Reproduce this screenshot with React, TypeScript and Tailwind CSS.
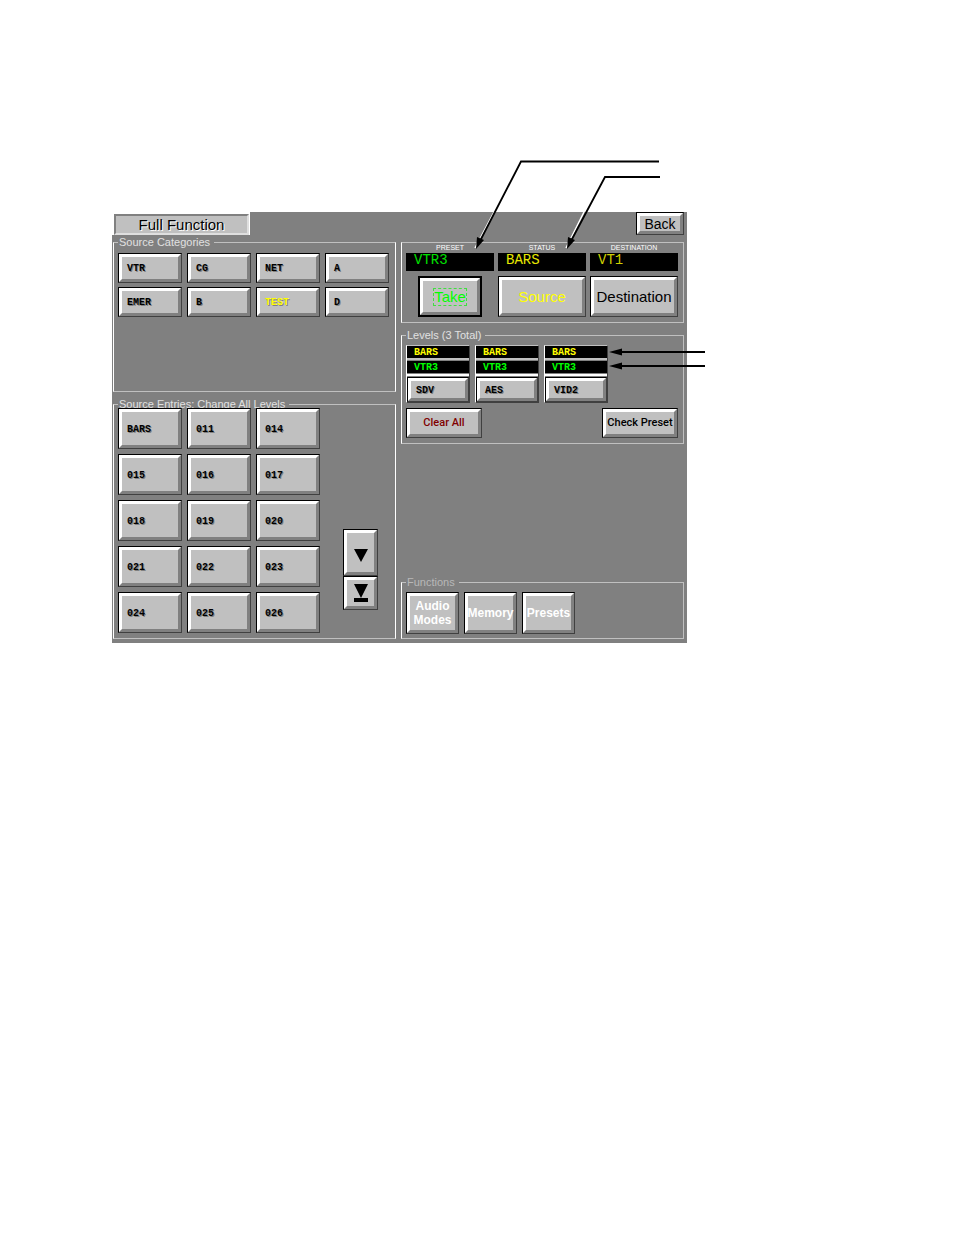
import React, { useState } from "react";
import clsx from "clsx";

const categories = ["VTR", "CG", "NET", "A", "EMER", "B", "TEST", "D"];

const entries = [
  "BARS", "011", "014",
  "015", "016", "017",
  "018", "019", "020",
  "021", "022", "023",
  "024", "025", "026",
];

const levels = ["SDV", "AES", "VID2"];

type PanelButtonProps = React.ButtonHTMLAttributes<HTMLButtonElement> & {
  face?: string;
};

// Raised button: dark outline with a mitred bevel inside
const PanelButton = ({ className, face, children, ...rest }: PanelButtonProps) => (
  <button
    type="button"
    className={clsx(
      "flex border border-t-black border-l-black border-r-[#404040] border-b-[#404040]",
      className
    )}
    {...rest}
  >
    <span
      className={clsx(
        "flex min-w-0 flex-1 items-center self-stretch border-[3px] border-t-white border-l-white border-r-[#808080] border-b-[#808080] bg-[#c0c0c0]",
        face
      )}
    >
      {children}
    </span>
  </button>
);

const monoFace =
  "pt-[2px] pl-[5px] font-['Liberation_Mono',monospace] text-[10px] leading-3 font-bold [text-shadow:1px_1px_0_#808080]";

type GroupProps = {
  title: string;
  className?: string;
  legendClass?: string;
  children: React.ReactNode;
};

const Group = ({ title, className, legendClass, children }: GroupProps) => (
  <fieldset className={clsx("min-w-0 border pl-1", className)}>
    <legend className={clsx("h-2 pr-1 pl-px text-[11px] leading-2", legendClass)}>
      {title}
    </legend>
    {children}
  </fieldset>
);

type ReadoutProps = { label: string; value: string; color: string };

const Readout = ({ label, value, color }: ReadoutProps) => (
  <div className="text-center">
    <div className="h-[10px] text-[7px] leading-[10px] text-white">{label}</div>
    <output
      aria-label={label}
      className={clsx(
        "block h-[18px] bg-black pl-2 text-left font-['Liberation_Mono',monospace] text-[14px] leading-[14px]",
        color
      )}
    >
      {value}
    </output>
  </div>
);

const App = () => {
  const [category, setCategory] = useState("TEST");

  return (
    <main className="relative min-h-screen bg-white pt-[212px] pl-[112px] font-['Liberation_Sans',Arial,sans-serif] text-black">
      <section className="w-full max-w-[575px] bg-[#808080] pb-1">
        <header className="flex h-[23px] justify-between pr-[3px]">
          <div className="flex bg-white pt-[2px] pr-px pl-[2px]">
            <h1 className="flex w-[135px] items-center justify-center border-2 border-t-[#808080] border-l-[#808080] border-r-[#dfdfdf] border-b-[#dfdfdf] bg-[#c0c0c0] text-[15px] leading-4 [text-shadow:1px_1px_0_#fff]">
              Full Function
            </h1>
          </div>
          <PanelButton className="w-12" face="justify-center text-[14px] leading-4">
            Back
          </PanelButton>
        </header>

        <div className="grid grid-cols-2 gap-[5px] pr-[3px] pl-px">
          {/* Left column */}
          <div className="flex flex-col gap-2 pt-[3px]">
            <Group
              title="Source Categories"
              className="h-[154px] border-x-white border-y-[#c0c0c0] pt-[7px] pr-[6px]"
              legendClass="text-[#e0e0e0]"
            >
              <div className="grid grid-cols-4 gap-x-[5px] gap-y-1">
                {categories.map((name) => (
                  <PanelButton
                    key={name}
                    className="h-[30px]"
                    face={clsx(monoFace, name === category && "text-[#ffff00]")}
                    onClick={() => setCategory(name)}
                  >
                    {name}
                  </PanelButton>
                ))}
              </div>
            </Group>

            <Group
              title="Source Entries: Change All Levels"
              className="border-x-white border-y-[#c0c0c0] pr-[6px] pb-[5px]"
              legendClass="text-[#e0e0e0]"
            >
              <div className="grid grid-cols-4 gap-x-[5px]">
                <div className="col-span-3 grid grid-cols-3 gap-[5px]">
                  {entries.map((name) => (
                    <PanelButton key={name} className="h-[41px]" face={monoFace}>
                      {name}
                    </PanelButton>
                  ))}
                </div>
                <div className="flex flex-col items-end justify-end pr-[11px] pb-[23px]">
                  <PanelButton
                    aria-label="Next page"
                    className="h-[47px] w-[35px]"
                    face="justify-center pt-1"
                  >
                    <svg width="14" height="14" viewBox="0 0 14 14">
                      <path d="M0 1h14L7 14z" />
                    </svg>
                  </PanelButton>
                  <PanelButton
                    aria-label="Last page"
                    className="h-[34px] w-[35px]"
                    face="justify-center"
                  >
                    <svg width="14" height="18" viewBox="0 0 14 18">
                      <path d="M0 0h14L7 14zM0 14h14v4H0z" />
                    </svg>
                  </PanelButton>
                </div>
              </div>
            </Group>
          </div>

          {/* Right column */}
          <div className="flex flex-col pt-[7px]">
            <div className="grid grid-cols-3 gap-x-1 gap-y-[5px] border border-[#c0c0c0] border-l-white pr-[5px] pb-[5px] pl-1">
              <Readout label="PRESET" value="VTR3" color="text-[#00e000]" />
              <Readout label="STATUS" value="BARS" color="text-[#e8e800]" />
              <Readout label="DESTINATION" value="VT1" color="text-[#d0d000]" />
              <PanelButton
                className="h-[41px] w-16 justify-self-center border-2 border-r-black border-b-black"
                face="justify-center text-[15px] leading-4 text-[#00ff00]"
              >
                <span className="border border-dashed border-[#40e040]">
                  Take
                </span>
              </PanelButton>
              <PanelButton
                className="h-[41px]"
                face="justify-center text-[15px] leading-4 text-[#ffff00]"
              >
                Source
              </PanelButton>
              <PanelButton className="h-[41px]" face="justify-center text-[15px] leading-4">
                Destination
              </PanelButton>
            </div>

            <Group
              title="Levels (3 Total)"
              className="mt-2 border-[#c0c0c0] border-l-white pt-[6px] pr-[5px] pb-[5px]"
              legendClass="text-[#e0e0e0]"
            >
              <div className="flex gap-[5px]">
                {levels.map((level) => (
                  <div
                    key={level}
                    className="h-[58px] w-16 border border-l-white border-t-[#c0c0c0] border-r-[#404040] border-b-[#404040] font-['Liberation_Mono',monospace] text-[10px] leading-[14px] font-bold"
                  >
                    <div className="h-3 bg-black pl-[7px] text-[#ffff00]">BARS</div>
                    <div className="h-[3px] border-b border-[#808080] bg-[#c0c0c0]" />
                    <div className="h-3 bg-black pl-[7px] text-[#00ff00]">VTR3</div>
                    <div className="h-1 border-y border-[#808080] bg-white" />
                    <PanelButton className="h-[25px] w-full" face={monoFace}>
                      {level}
                    </PanelButton>
                  </div>
                ))}
              </div>
              <div className="mt-[5px] flex justify-between">
                <PanelButton
                  className="h-[30px] w-[76px]"
                  face="justify-center font-[Roboto,sans-serif] text-[11px] font-medium text-[#800000]"
                >
                  Clear All
                </PanelButton>
                <PanelButton
                  className="h-[30px] w-[76px]"
                  face="justify-center font-[Roboto,sans-serif] text-[11px] font-medium whitespace-nowrap"
                >
                  Check Preset
                </PanelButton>
              </div>
            </Group>

            <Group
              title="Functions"
              className="mt-auto border-[#c0c0c0] border-l-white pt-[6px] pb-1"
              legendClass="text-[#b8b8b8]"
            >
              <div className="flex gap-[5px]">
                {["Audio Modes", "Memory", "Presets"].map((name) => (
                  <PanelButton
                    key={name}
                    className="h-[42px] w-[53px]"
                    face="justify-center text-[12px] leading-[14px] font-bold text-white"
                  >
                    {name}
                  </PanelButton>
                ))}
              </div>
            </Group>
          </div>
        </div>
      </section>

      {/* Callout lines over the panel */}
      <svg
        className="pointer-events-none absolute top-0 left-0"
        width="720"
        height="400"
        viewBox="0 0 720 400"
        fill="none"
        aria-hidden="true"
      >
        <path d="M494 212L475 248M584 212L566 248" stroke="#fff" strokeWidth="1.5" />
        <path
          d="M659 161.5H521L480 241M660 177H605L571 241M620 352H705M620 366H705"
          stroke="#000"
          strokeWidth="1.8"
        />
        <path
          d="M476 249L477 237L484 240zM567 249L568 237L575 240zM609 352L622 348.5V355.5zM609 366L622 362.5V369.5z"
          fill="#000"
        />
      </svg>
    </main>
  );
};

export default App;
